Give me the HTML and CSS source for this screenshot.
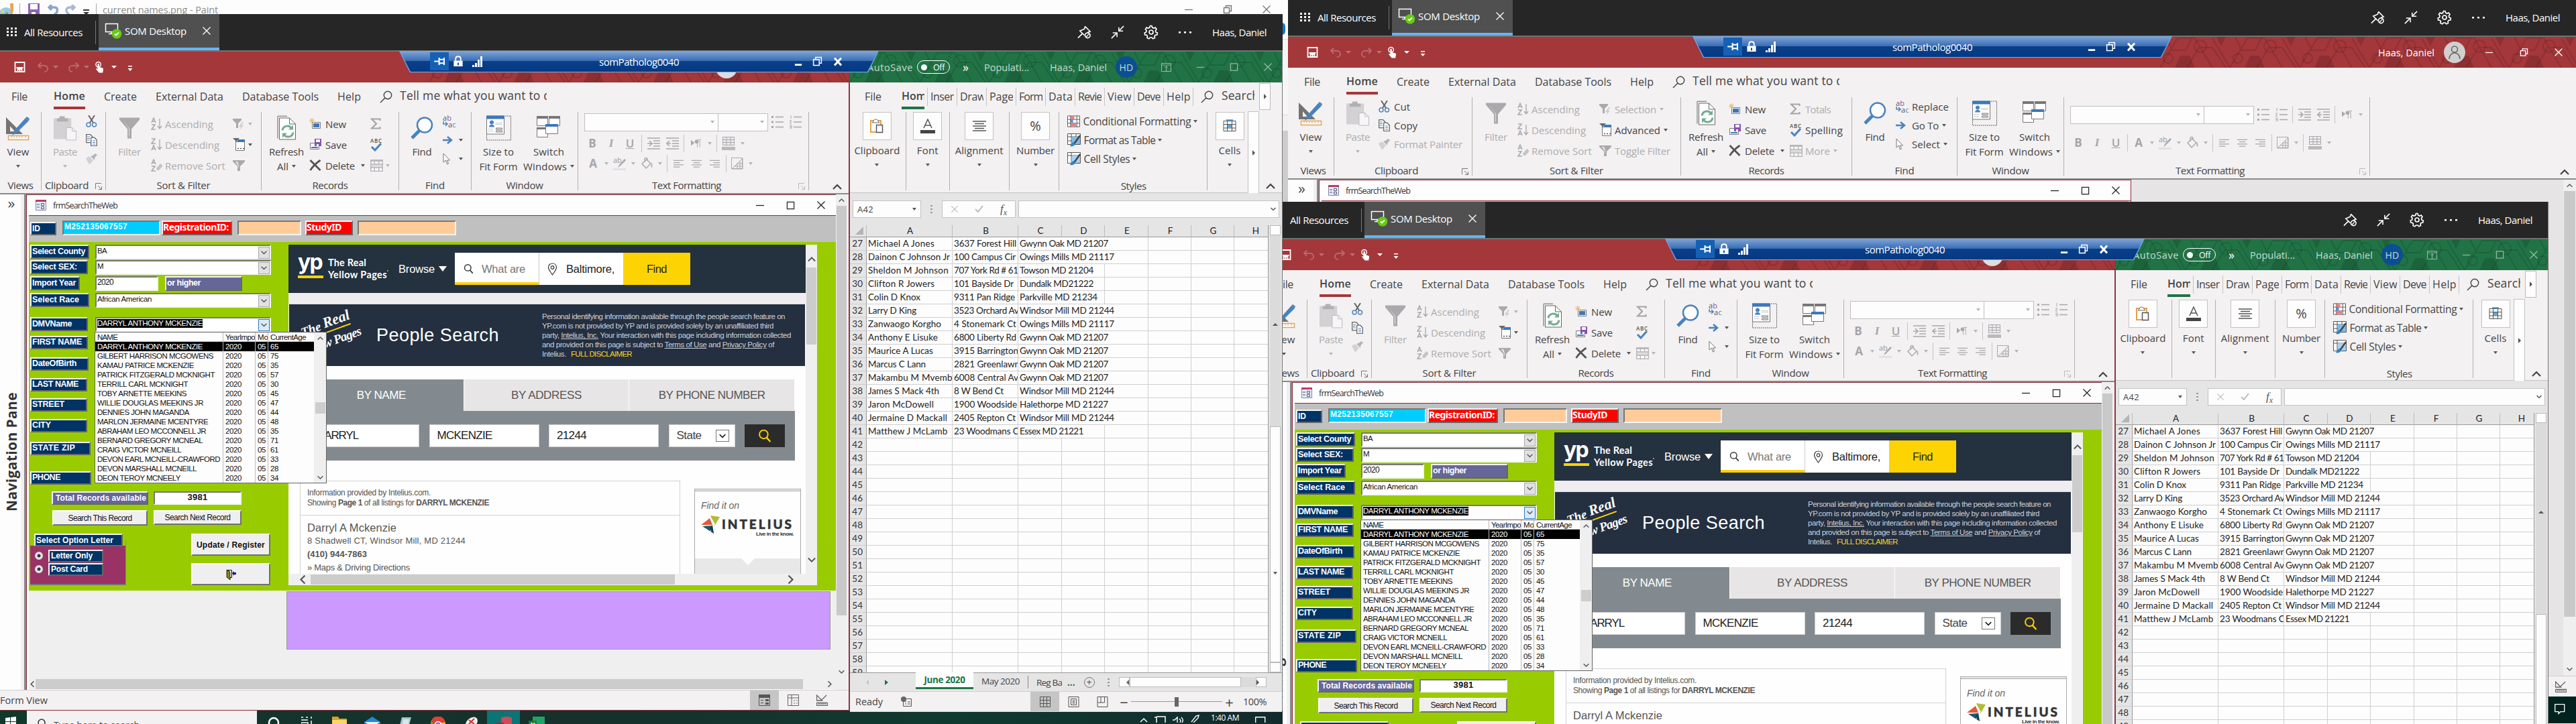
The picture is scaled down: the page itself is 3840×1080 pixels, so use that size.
FILE: index.html
```html
<!DOCTYPE html>
<html lang="en">
<head>
<meta charset="utf-8">
<title>Desktop</title>
<link rel="stylesheet" href="styles.css">
</head>
<body>
<svg class="sprite" width="0" height="0" aria-hidden="true">
<defs>
<pattern id="hex" width="104" height="46" patternUnits="userSpaceOnUse"><g fill="none" stroke="#000" stroke-opacity=".13" stroke-width="2"><path d="M0 46 26 2h26l26 44M40 46l18-30h20l20 30M78 2l26 44M8 0l10 20h20L48 0"/><circle cx="60" cy="14" r="9"/><circle cx="12" cy="32" r="7"/></g><path d="M30 28h14l8 18H22zM84 0h14l-7 14z" fill="#000" fill-opacity=".14"/></pattern>
</defs>
<symbol id="grid9" viewBox="0 0 16 16"><path fill="#fff" d="M0 1h3v3H0zM6 1h3v3H6zM12 1h3v3h-3zM0 6h3v3H0zM6 6h3v3H6zM12 6h3v3h-3zM0 11h3v3H0zM6 11h3v3H6zM12 11h3v3h-3z"/></symbol>
<symbol id="monitor" viewBox="0 0 26 26"><path d="M1.500 2.500h18v12h-18zM6 17.500h8M10 15v2" fill="none" stroke="#fff" stroke-width="1.500"/><circle cx="18" cy="17.500" r="7.300" fill="#6c1"/><path d="m15 17.500 2 2 4-4" fill="none" stroke="#fff" stroke-width="1.800"/></symbol>
<symbol id="x" viewBox="0 0 14 14"><path d="m1.500 1.500 11 11m0-11-11 11" fill="none" stroke="currentColor" stroke-width="1.300"/></symbol>
<symbol id="xb" viewBox="0 0 14 14"><path d="m2 1.500 10 11m0-11-10 11" fill="none" stroke="currentColor" stroke-width="3"/></symbol>
<symbol id="min" viewBox="0 0 14 14"><path d="M1 7.500h12" stroke="currentColor" stroke-width="1.300"/></symbol>
<symbol id="minb" viewBox="0 0 14 14"><path d="M1 12h11" stroke="currentColor" stroke-width="3"/></symbol>
<symbol id="max" viewBox="0 0 14 14"><path d="M1.500 1.500h11v11h-11z" fill="none" stroke="currentColor" stroke-width="1.300"/></symbol>
<symbol id="restore" viewBox="0 0 14 14"><path d="M1.500 4.500h8v8h-8zM4.500 4V1.500h8v8H10" fill="none" stroke="currentColor" stroke-width="1.400"/></symbol>
<symbol id="pin" viewBox="0 0 22 22"><path d="m12 2 8 8-3 1-3 3M12 2l-1 4-5 2-2 1 4 4-7 7M8 13l3 3" fill="none" stroke="#fff" stroke-width="1.700"/><circle cx="16" cy="16" r="4" fill="#262626" stroke="#fff" stroke-width="1.700"/><path d="m13.500 18.500 5-5" stroke="#fff" stroke-width="1.400"/></symbol>
<symbol id="shrink" viewBox="0 0 22 22"><path d="m1 21 9-9M3 12h7v7M21 1l-8 8M13 3v6h7" fill="none" stroke="#fff" stroke-width="1.700"/></symbol>
<symbol id="gear" viewBox="0 0 22 22"><path d="m9.500 1.500-.7 2.600-2 1-2.600-1L2.500 6.500l1.500 2-.4 2.500-2.400 1 .5 3 2.600.4 1.200 1.800-.5 2.400 2.700 1.200 1.800-1.800h2.500l1.800 1.800 2.700-1.200-.5-2.400 1.200-1.800 2.600-.4.500-3-2.400-1-.4-2.500 1.500-2-1.700-2.400-2.600 1-2-1-.7-2.600z" fill="none" stroke="#fff" stroke-width="1.700"/><circle cx="11" cy="11" r="3" fill="none" stroke="#fff" stroke-width="1.700"/></symbol>
<symbol id="dots" viewBox="0 0 22 4"><path fill="#fff" d="M1 1h3v2.500H1zM9 1h3v2.500H9zM17 1h3v2.500h-3z"/></symbol>
<symbol id="save" viewBox="0 0 16 16"><path d="M1 1h14v14H1z" fill="none" stroke="#fff" stroke-width="1.800"/><path d="M3 9h10M5 15v-4h6v4" fill="none" stroke="#fff" stroke-width="1.800"/><path d="M7 12h2v3H7z" fill="#fff"/></symbol>
<symbol id="undo" viewBox="0 0 18 16"><path d="M1 5h9c9 0 8 10 1 10M6 .5 1.500 5 6 9.500" fill="none" stroke="#fff" stroke-width="2"/></symbol>
<symbol id="touch" viewBox="0 0 16 18"><circle cx="6" cy="5" r="4" fill="none" stroke="#fff" stroke-width="1.500"/><path fill="#fff" d="M4.700 4.500c0-1.600 2.600-1.600 2.600 0V9l5 1.200c1.700.4 1.700 1.500 1.500 3L13 18H7l-5-6c1-1 2-.5 2.700.3z"/></symbol>
<symbol id="more" viewBox="0 0 8 10"><path fill="#fff" d="M1 1h6v1.500H1zM.500 5h7L4 9z"/></symbol>
<symbol id="push" viewBox="0 0 18 14"><path d="M0 7h7M8 1v12M8 4h7M8 10h7M16 1v12" stroke="#fff" stroke-width="2.200"/></symbol>
<symbol id="lock" viewBox="0 0 14 18"><path d="M3 8V5c0-5 8-5 8 0v3" fill="none" stroke="#fff" stroke-width="2"/><path fill="#fff" d="M0 8h14v9H0z"/><path d="M7 11v4" stroke="#0a3d83" stroke-width="2"/></symbol>
<symbol id="signal" viewBox="0 0 16 16"><path fill="#fff" d="M0 13h3v3H0zM4 10h3v6H4zM8 5h3v11H8zM12 0h3v16h-3z"/></symbol>
<symbol id="search" viewBox="0 0 19 19"><circle cx="12" cy="7" r="5.700" fill="none" stroke="currentColor" stroke-width="1.400"/><path d="M8 11 1 18" stroke="currentColor" stroke-width="1.500"/></symbol>
<symbol id="views" viewBox="0 0 36 36"><path d="M0 2v25h25zM6 15l7 8H6z" fill="#737373" fill-rule="evenodd"/><path d="m29 3 5 4-18 18-7 4 3-7z" fill="#4a82bd"/><path d="m31 1 4 3-1 3-5-4z" fill="#4a82bd"/><path d="M3.500 29.500h30v6h-30z" fill="#fff" stroke="#e0a55d" stroke-width="1.500"/><path d="M8 30v3m4-3v3m4-3v3m4-3v3m4-3v3m5-3v3" stroke="#e0a55d"/></symbol>
<symbol id="paste" viewBox="0 0 36 38"><path fill="#d2d1d3" d="M0 4h27v32H0z"/><path fill="#b1b0b2" d="M5 4h4V1h8v3h5v5H5z"/><path d="M19.500 18.500h9l6 6v13h-15z" fill="#f6f5f7" stroke="#bbbabd"/><path d="M28.500 18v6h6" fill="none" stroke="#bbbabd"/></symbol>
<symbol id="cut" viewBox="0 0 17 18"><path d="M4 0l7 11M13 0 6 11" stroke="#666" stroke-width="2"/><circle cx="4" cy="14" r="3" fill="none" stroke="#5485bd" stroke-width="1.500"/><circle cx="12.500" cy="14" r="3" fill="none" stroke="#5485bd" stroke-width="1.500"/></symbol>
<symbol id="copy" viewBox="0 0 17 18"><path d="M.700.700h6l3 3v9h-9z" fill="#fff" stroke="#666" stroke-width="1.300"/><path d="M7.700 5.200h5l3.500 3.500v9H7.700z" fill="#fff" stroke="#666" stroke-width="1.300"/><path d="M2 4h4M2 6.500h4M2 9h4m4 1h4m-4 2.500h4M10 15h4" stroke="#5485bd"/></symbol>
<symbol id="brush" viewBox="0 0 17 17"><path d="m0 7 5-3 6 6-5 6-2-1z" fill="#d2d1d3"/><path d="m14 0 3 2-4 5 0 3-6-6 3-1z" fill="#b5b4b6"/></symbol>
<symbol id="funnel" viewBox="0 0 32 33"><path d="M1 1h30v3L19 18v14h-6V18L1 4z" fill="#aaa9ab"/><path d="M6 5 15 17v12h1V17z" fill="#dddcde"/></symbol>
<symbol id="az" viewBox="0 0 17 19"><path d="M1 8 4 1l3 7M2 6h4M1 11h5l-5 7h6" fill="none" stroke="#a9a8aa" stroke-width="1.500"/><path d="M13 2v15M10 13l3 4 3-4" fill="none" stroke="#a9a8aa" stroke-width="1.300"/></symbol>
<symbol id="za" viewBox="0 0 17 19"><path d="M1 1h5L1 8h6M1 18l3-7 3 7M2 16h4" fill="none" stroke="#a9a8aa" stroke-width="1.500"/><path d="M13 2v15M10 13l3 4 3-4" fill="none" stroke="#a9a8aa" stroke-width="1.300"/></symbol>
<symbol id="azx" viewBox="0 0 17 19"><path d="M1 8 4 1l3 7M2 6h4M1 11h5l-5 7h6" fill="none" stroke="#a9a8aa" stroke-width="1.500"/><path d="m8 14 6-7 4 3-6 7H9z" fill="#c5c4c6"/></symbol>
<symbol id="fsel" viewBox="0 0 17 18"><path d="M0 1h13v2L8 8v7H5V8L0 3z" fill="#aaa9ab"/><path d="m14 6-5 7h3l-2 5 6-7h-3l3-5z" fill="#cfced0"/></symbol>
<symbol id="fadv" viewBox="0 0 18 19"><path d="M0 0h10L6 4v4H4V4z" fill="#666"/><path d="M4.500 5.500h13v13h-13z" fill="#fff" stroke="#777"/><path d="M7 2h11v4H7z" fill="#3d78b8"/><path d="M7 15.500h2m2 0h2m2 0h2" stroke="#555" stroke-width="1.500"/></symbol>
<symbol id="ftog" viewBox="0 0 18 18"><path d="M0 1h18v2l-7 7v7H7v-7L0 3z" fill="#aaa9ab"/><path d="M4 3h3l2 6v6l-1-6z" fill="#eee"/></symbol>
<symbol id="refresh" viewBox="0 0 28 37"><path d="M1 34V.700h14" fill="none" stroke="#666"/><path d="M3.500 3.500h15l9 9v23h-24z" fill="#fff" stroke="#666"/><path d="M18.500 3.500v9h9" fill="none" stroke="#666"/><path d="M8 22c1-7 10-9 14-3M24 25c-1 7-10 9-14 3" fill="none" stroke="#74ab8f" stroke-width="3"/><path d="M24 14v7h-7zM8 33v-7h7z" fill="#74ab8f"/></symbol>
<symbol id="new" viewBox="0 0 18 17"><path d="M4.500 6.500h12v9h-12z" fill="#fff" stroke="#777"/><path d="M6 8h9v6H6z" fill="#3d78b8"/><path d="M4 0v8M0 4h8M1 1l6 6m0-6L1 7" stroke="#ecb55f"/></symbol>
<symbol id="rsave" viewBox="0 0 18 17"><path d="M1.500 6.500h13v9h-13z" fill="#fff" stroke="#777"/><path d="M3 12h10v2H3z" fill="#3d78b8"/><path d="M8 0h10v11H8z" fill="#8453ad"/><path d="M10 1h6v4h-6zM11 8h3v3h-3z" fill="#fff"/></symbol>
<symbol id="del" viewBox="0 0 18 17"><path d="m1 1 15 15M16 1C10 5 5 10 1 16" fill="none" stroke="#555" stroke-width="2.800"/></symbol>
<symbol id="sigma" viewBox="0 0 16 17"><path d="M14.500 4V1.500H2l7 7-7 7h12.500V13" fill="none" stroke="#a6a5a7" stroke-width="2.200"/></symbol>
<symbol id="abc" viewBox="0 0 18 20"><text x="0" y="7" font-size="8" font-family="Open Sans" font-weight="600" textLength="17" fill="#555">ABC</text><path d="m2 13 5 5 9-10" fill="none" stroke="#4a82bd" stroke-width="3"/></symbol>
<symbol id="rmore" viewBox="0 0 19 18"><path d="M0 0h19v18H0z" fill="#b9b8ba"/><path d="M1.500 3h4v3h-4zM7 3h5v3H7zM13.500 3h4v3h-4zM1.500 13h4v3.500h-4zM7 13h5v3.500H7zM13.500 13h4v3.500h-4z" fill="#fff"/><path d="M1.500 7.500h16v4h-16z" fill="#dcdbdd"/></symbol>
<symbol id="find" viewBox="0 0 34 34"><circle cx="21" cy="12.500" r="11" fill="#fff" stroke="#4a82bd" stroke-width="2.500"/><path d="M13 21 2 32" stroke="#4a82bd" stroke-width="5"/></symbol>
<symbol id="replace" viewBox="0 0 20 18"><text x="0" y="8" font-size="11" font-family="Open Sans" fill="#555">a<tspan fill="#8453ad">b</tspan></text><text x="8" y="18" font-size="11" font-family="Open Sans" fill="#555">a<tspan fill="#4a82bd">c</tspan></text><path d="M1 9v4h5M4 10l3 3-3 3" fill="none" stroke="#4a82bd" stroke-width="1.500"/></symbol>
<symbol id="goto" viewBox="0 0 15 12"><path d="M0 6h12M7 1l6 5-6 5" fill="none" stroke="#4a82bd" stroke-width="2.500"/></symbol>
<symbol id="cursor" viewBox="0 0 12 18"><path d="M1 1v13l3.500-3 2 6 2-1-2-5h4z" fill="#fff" stroke="#777"/></symbol>
<symbol id="sizeto" viewBox="0 0 37 37"><path d="M28 .500h8.500v36H.500V28" fill="none" stroke="#666" stroke-dasharray="2 1"/><path d="M.500.500h26v27H.500z" fill="#fff" stroke="#777"/><path d="M0 0h27v5H0z" fill="#3d78b8"/><circle cx="8" cy="10" r="3" fill="#4a82bd"/><path d="M4 17c0-5 8-5 8 0z" fill="#4a82bd"/><path d="M14 11h9M14 13h9M3 20h8M3 23h8" stroke="#999" stroke-dasharray="1 1"/><path d="M14.500 18.500h9v2h-9zM14.500 22.500h9v2h-9z" fill="none" stroke="#777"/></symbol>
<symbol id="switch" viewBox="0 0 36 33"><g fill="#fff" stroke="#777"><path d="M.500 1.500h16v13H.500zM18.500 1.500h16v13h-16zM.500 18.500h16v13H.500z"/><path d="M13.500 13.500h18v13h-18z"/></g><path d="M0 0h17v4H0zM18 0h17v4H18zM0 17h13v3H0z" fill="#777"/><path d="M13 12h19v4H13z" fill="#3d78b8"/></symbol>
<symbol id="bul" viewBox="0 0 18 20"><path d="M6 2.500h12M6 10h12M6 17.500h12" stroke="#a9a8aa" stroke-width="1.300"/><path d="M0 1h3v3H0zM0 8.500h3v3H0zM0 16h3v3H0z" fill="#a9a8aa"/></symbol>
<symbol id="num" viewBox="0 0 18 20"><path d="M6 2.500h12M6 10h12M6 17.500h12" stroke="#a9a8aa" stroke-width="1.300"/><path d="M2 0v5M0 8h3l-3 4h3M0 15h3v5H0m0-2.500h3" fill="none" stroke="#a9a8aa"/></symbol>
<symbol id="ind" viewBox="0 0 19 18"><path d="M0 1h19M9 5h10M9 9h10M9 13h10M0 17h19M0 9h6M3 5l4 4-4 4" fill="none" stroke="#a9a8aa" stroke-width="1.600"/></symbol>
<symbol id="outd" viewBox="0 0 19 18"><path d="M0 1h19M9 5h10M9 9h10M9 13h10M0 17h19M1 9h6M5 5 1 9l4 4" fill="none" stroke="#a9a8aa" stroke-width="1.600"/></symbol>
<symbol id="para" viewBox="0 0 16 14"><path d="m0 2 5 4-5 4zM11 1h5M10 13V1M14 13V1" fill="#a9a8aa" stroke="#a9a8aa"/><circle cx="9" cy="4" r="3" fill="#a9a8aa"/></symbol>
<symbol id="tgrid" viewBox="0 0 20 20"><path d="M1.500.500h17v12h-17zM1 4.500h17M1 8.500h17M7 0v12M13 0v12" fill="#eceaee" stroke="#a9a8aa"/><path fill="#bab9bb" d="M0 15h20v5H0z"/></symbol>
<symbol id="hilite" viewBox="0 0 20 20"><text x="0" y="9" font-size="11" font-family="Open Sans" fill="#999">ab</text><path d="m19 5-9 9-3 2 2-4 8-9z" fill="#a9a8aa"/><path fill="#e2e1e3" d="M0 17h19v3H0z"/></symbol>
<symbol id="bucket" viewBox="0 0 18 18"><path d="M2 9 9 3l6 6-7 7zM6 7V2c0-2 4-2 4 0v3" fill="none" stroke="#a9a8aa" stroke-width="1.400"/><path d="M16 7c2 3 2 6 1 8-2 0-2-3-1-8z" fill="#bbb"/></symbol>
<symbol id="al" viewBox="0 0 16 12"><path d="M0 1h16M0 4.500h10M0 8h16M0 11.500h10" stroke="#a9a8aa" stroke-width="1.300"/></symbol>
<symbol id="ac" viewBox="0 0 16 12"><path d="M0 1h16M3 4.500h10M0 8h16M3 11.500h10" stroke="#a9a8aa" stroke-width="1.300"/></symbol>
<symbol id="ar" viewBox="0 0 16 12"><path d="M0 1h16M6 4.500h10M0 8h16M6 11.500h10" stroke="#a9a8aa" stroke-width="1.300"/></symbol>
<symbol id="gl" viewBox="0 0 18 18"><path d="M.500.500h16v16H.500z" fill="none" stroke="#888" stroke-dasharray="2 1"/><path d="M1 17 17 1v16zM5 13h12M9 9h8M9 17V9M13 17V5" fill="none" stroke="#a9a8aa"/></symbol>
<symbol id="launch" viewBox="0 0 10 10"><path d="M9 .500H.500V9M4 4l5 5M9.500 5v4.500H5" fill="none" stroke="currentColor"/></symbol>
<symbol id="up" viewBox="0 0 14 9"><path d="m1 8 6-6 6 6" fill="none" stroke="currentColor" stroke-width="2.200"/></symbol>
<symbol id="formico" viewBox="0 0 16 16"><path d="M.500.500h15v15H.500z" fill="#e9edf8" stroke="#7d86a8"/><path d="M0 0h16v3H0z" fill="#bb3b68"/><path d="M2 7h4M2 11h4" stroke="#44507a"/><path d="M8.500 5.500h4v3h-4zM8.500 10.500h4v3h-4z" fill="#fff" stroke="#44507a"/></symbol>
<symbol id="pinmap" viewBox="0 0 14 19"><path d="M7 18C3 12 1 10 1 7c0-8 12-8 12 0 0 3-2 5-6 11z" fill="none" stroke="#333" stroke-width="1.200"/><circle cx="7" cy="7" r="2.300" fill="none" stroke="#333" stroke-width="1.200"/></symbol>
<symbol id="mag" viewBox="0 0 19 19"><circle cx="8" cy="7.500" r="6" fill="none" stroke="currentColor" stroke-width="1.800"/><path d="m12 12 5.500 6" stroke="currentColor" stroke-width="2.200"/></symbol>
<symbol id="door" viewBox="0 0 16 16"><path d="M2.500 1.500h7v11h-7z" fill="#fff" stroke="#000"/><path d="m2 1 5 3v12l-5-4z" fill="#8a8500" stroke="#000" stroke-width=".8"/><path d="m10 6 3-3v2h3v3h-3v2z" fill="#11168f"/></symbol>
<symbol id="intel" viewBox="0 0 28 28"><path d="M14 0 28 2 20 16z" fill="#b5ba38"/><path d="M0 14 13 4l4 10z" fill="#e35a34"/><path d="m2 16 14-1 3 12z" fill="#185a70"/><path d="m14 1 3 14-5 12 9-14z" fill="#fff"/><path d="m17 14 2 13-6-7z" fill="#123f52"/></symbol>
<symbol id="clip" viewBox="0 0 20 22"><path d="M1 3h15v17H1z" fill="#fff" stroke="#e3a14c" stroke-width="2"/><path d="M5 4c0-4 7-4 7 0l2 2H3z" fill="#fff" stroke="#666"/><path d="M9.500 9.500h9v11h-9z" fill="#fff" stroke="#555" stroke-width="1.500"/></symbol>
<symbol id="fontA" viewBox="0 0 22 22"><path d="m5 14 6-13 6 13M7 10h8" fill="none" stroke="#555" stroke-width="1.500"/><path fill="#444" d="M0 17h22v5H0z"/></symbol>
<symbol id="alx" viewBox="0 0 20 16"><path d="M0 1h20M3 4.500h14M0 8h20M3 11.500h14M0 15h20" stroke="#555" stroke-width="1.300"/></symbol>
<symbol id="cond" viewBox="0 0 20 18"><path d="M.500.500h19v17H.500zM5 0v18M15 0v18M0 6h20M0 12h20" fill="#fff" stroke="#555"/><path fill="#ee7b83" d="M5 1h6v5H5zM5 12h9v5H5z"/><path fill="#3f97dd" d="M5 6h4v5H5z"/></symbol>
<symbol id="ftable" viewBox="0 0 20 20"><path d="M.500.500h19v16H.500zM6 0v17M13 0v17M0 5h20M0 11h20" fill="#fff" stroke="#555"/><path fill="#7cbced" d="M7 5h12v11H7z"/><path d="m19 3-7 10-2 2" stroke="#444" stroke-width="2.500"/><path d="m4 19 4-6 4 3c-2 3-5 4-8 3z" fill="#2f86cf"/></symbol>
<symbol id="cellst" viewBox="0 0 20 20"><path d="M.500.500h19v16H.500zM6 0v17M0 5h20" fill="#fff" stroke="#555"/><path fill="#a7d1f2" d="M7 5h12v11H7z"/><path d="m19 3-7 10-2 2" stroke="#444" stroke-width="2.500"/><path d="m4 19 4-6 4 3c-2 3-5 4-8 3z" fill="#2f86cf"/></symbol>
<symbol id="cells" viewBox="0 0 20 20"><path d="M1 2.500h18v15H1zM6.500 2v16M13.500 2v16M1 7.500h18M1 13h18" fill="#fff" stroke="#555"/><path fill="#5aa9e4" d="M5 0h10v2H5zM7 8h6v5H7z"/></symbol>
<symbol id="ribopt" viewBox="0 0 15 13"><path d="M.500.500h14v12H.500zM1 3h13M7.500 12V5M5 7l2.500-2.500L10 7" fill="none" stroke="currentColor"/></symbol>
<symbol id="check" viewBox="0 0 13 11"><path d="m1 6 4 4 7-9" fill="none" stroke="#bbb" stroke-width="2"/></symbol>
<symbol id="vgrid" viewBox="0 0 16 16"><path d="M.500.500h15v15H.500zM5.500 0v16M10.500 0v16M0 5.500h16M0 10.500h16" fill="none" stroke="#555"/></symbol>
<symbol id="vpage" viewBox="0 0 16 16"><path d="M.500.500h15v15H.500zM4 3.500h8v9H4zM6 6h4M6 8h4M6 10h4" fill="none" stroke="#555"/></symbol>
<symbol id="vbreak" viewBox="0 0 16 16"><path d="M.500.500h15v15H.500zM.500 9h5V1M5 9h6V1" fill="none" stroke="#555"/></symbol>
<symbol id="macro" viewBox="0 0 16 15"><path d="M3.500 3.500h12v11h-12zM6 8h2m2 0h4M6 11h2m2 0h4" fill="none" stroke="#555"/><circle cx="4" cy="4" r="4" fill="#666"/></symbol>
<symbol id="aform" viewBox="0 0 17 17"><path d="M.500.500h16v16H.500z" fill="none" stroke="#555"/><path fill="#555" d="M0 0h17v5H0zM3 8h4v1H3zM10 7h5v3h-5zM3 12h4v1H3zM10 12h5v3h-5z"/></symbol>
<symbol id="alay" viewBox="0 0 17 17"><path d="M.500.500h16v16H.500zM1 5h15M6 1v15M9 9h2m2 0h2m-6 4h2m2 0h2" fill="none" stroke="#666"/></symbol>
<symbol id="ades" viewBox="0 0 17 17"><path d="M.500 1v8h8zM15 1 8 8M.500 12.500h16v4H.500zM4 13v2m3-2v2m3-2v2m3-2v2" fill="none" stroke="#666" stroke-width="1.300"/></symbol>
<symbol id="person" viewBox="0 0 32 32"><circle cx="16" cy="16" r="16" fill="#d2cfcf"/><circle cx="16" cy="11.500" r="4.500" fill="none" stroke="#666" stroke-width="1.600"/><path d="M8 26c0-12 16-12 16 0" fill="none" stroke="#666" stroke-width="1.600"/></symbol>
<symbol id="note" viewBox="0 0 16 16"><path d="M.700.700h14v11H9l-3 3v-3H.700z" fill="none" stroke="#fff" stroke-width="1.300"/></symbol>
</svg>
<div class="desk">
  <section class="paint">
    <div class="paint-title">
      <svg width="20" height="22" viewBox="0 0 20 22"><ellipse cx="9" cy="15" rx="10" ry="9" fill="#9cc7e6"/><path fill="#e9a35c" d="M15 0h5v12l-4 6z"/><circle cx="4" cy="12" r="2" fill="#e8df53"/><circle cx="10" cy="15" r="2" fill="#5eb45b"/><circle cx="4" cy="18" r="2" fill="#e14b4b"/></svg><i class="bar"></i>
      <svg width="17" height="18" viewBox="0 0 17 18"><path fill="#8e66b5" d="M0 0h17v18H0z"/><path fill="#fff" d="M3 1h11v8H3zM5 13h6v5H5z"/></svg>
      <svg class="pu" width="16" height="16" viewBox="0 0 16 16"><path d="M2 4h8c6 0 6 7 0 11M6 0 2 4l4 4" fill="none" stroke="#8ba5cf" stroke-width="3.500"/></svg>
      <svg class="pr" width="16" height="16" viewBox="0 0 16 16"><path d="M14 4H8C0 4 0 11 7 15M10 0l4 4-4 4" fill="none" stroke="#a8b9d2" stroke-width="3.500"/></svg>
      <svg class="pm" width="9" height="10" viewBox="0 0 9 10"><path d="M0 1h9v2H0zM0 5h9L4.500 9z" fill="#333"/></svg><i class="bar"></i>
      <span class="fit pname" data-w="172">current names.png - Paint</span>
      <span class="spring"></span>
      <svg class="wc" width="14" height="14"><use href="#min"/></svg><svg class="wc" width="14" height="14"><use href="#restore"/></svg><svg class="wc last" width="14" height="14"><use href="#x"/></svg>
    </div>
    <div class="paint-side"><i class="help"></i><i class="rib"></i><i class="gap"></i><i class="thumb"></i></div>
  </section>
  <section class="session main" id="session-main"></section>
  <section class="session wide" id="session-wide"></section>
  <section class="session copy" id="session-copy"></section>
</div>
<script src="app.js"></script>
</body>
</html>
```
FILE: app.js
```js
const ic = (n, w, h, c = '') => `<svg class="ic ${c}" width="${w}" height="${h}"><use href="#${n}"/></svg>`;
const fit = (t, w, c = '') => `<span class="fit ${c}" data-w="${w}">${t}</span>`;
const caret = (c = '') => `<i class="caret ${c}"></i>`;
const box = (inner, c = '') => `<span class="cell ${c}">${inner}</span>`;
const vsep = '<i class="vsep"></i>';

const topbar = `
<header class="topbar">
  <div class="all">${ic('grid9', 16, 16)}${fit('All Resources', 87)}</div>
  <div class="som">${ic('monitor', 26, 26)}${fit('SOM Desktop', 92)}${ic('x', 14, 14, 'close')}</div>
  <span class="spring"></span>
  ${ic('pin', 21, 22)}${ic('shrink', 20, 20)}${ic('gear', 22, 22)}${ic('dots', 22, 4)}${fit('Haas, Daniel', 81, 'user')}
</header>`;

const connbar = `
<div class="conn"><div class="conn-in">
  <span class="push">${ic('push', 17, 13)}</span>${ic('lock', 14, 17)}${ic('signal', 16, 16)}
  <span class="host">${fit('somPatholog0040', 119)}</span>
  ${ic('minb', 13, 14)}${ic('restore', 15, 15, 'thick')}${ic('xb', 14, 14)}
</div></div>`;

const cmd = (icon, w, h, text, tw, c = '', car = '') =>
  `<div class="cmd ${c}"><span class="ci">${ic(icon, w, h)}</span>${text ? fit(text, tw) : ''}${car}</div>`;

function ribbon(wide) {
  const L = (t, w) => (wide ? [t, w] : ['', 0]);
  const font = `<div class="combo c1">${caret('dis')}</div><div class="combo c2">${caret('dis')}</div>${box(ic('bul', 18, 20), 'c27')}${box(ic('num', 18, 20), 'c27')}`;
  const indent = box(ic('ind', 19, 18)) + box(ic('outd', 19, 18));
  const para = box(ic('para', 15, 14)) + box(caret('dis'), 'c14');
  const biu = box('<b>B</b>') + box('<em>I</em>') + box('<u>U</u>');
  const tg = box(ic('tgrid', 20, 20)) + box(caret('dis'), 'c14');
  const paint = box('<b>A</b>', 'c26') + box(caret('dis'), 'c14') + box(ic('hilite', 20, 20), 'c26') + box(caret('dis'), 'c14') + box(ic('bucket', 18, 18), 'c26') + box(caret('dis'), 'c14');
  const al = box(ic('al', 15, 12), 'c27') + box(ic('ac', 15, 12), 'c27') + box(ic('ar', 15, 12), 'c27');
  const gl = box(ic('gl', 18, 18), 'c26') + box(caret('dis'), 'c14');
  const text = wide
    ? `<div class="trow t1">${font}${vsep}${indent}${vsep}${para}</div><div class="trow t2">${biu}${vsep}${paint}${vsep}${al}${vsep}${gl}${vsep}${tg}</div>`
    : `<div class="trow t1">${font}</div><div class="trow t2">${biu}${vsep}${indent}${vsep}${para}${vsep}${tg}</div><div class="trow t3">${paint}${vsep}${al}${vsep}${gl}</div>`;
  return `
<div class="groups">
  <div class="group g-views"><div class="gbody"><div class="big">${ic('views', 36, 38)}${fit('View', 33)}${caret()}</div></div><div class="glabel">${fit('Views', 38)}</div></div>
  <div class="group g-clip"><div class="gbody"><div class="big dis">${ic('paste', 35, 38)}${fit('Paste', 36)}${caret('dis')}</div>
    <div class="col tight">${cmd('cut', 17, 18, ...L('Cut', 24))}${cmd('copy', 17, 18, ...L('Copy', 35))}${cmd('brush', 17, 17, ...L('Format Painter', 102), 'dis')}</div></div>
    <div class="glabel"><span>${fit('Clipboard', 65)}</span>${ic('launch', 10, 10)}</div></div>
  <div class="group g-sort"><div class="gbody"><div class="big dis">${ic('funnel', 32, 35)}${fit('Filter', 34)}</div>
    <div class="col c-az">${cmd('az', 17, 19, 'Ascending', 72, 'dis')}${cmd('za', 17, 19, 'Descending', 81, 'dis')}${cmd('azx', 17, 19, 'Remove Sort', 90, 'dis')}</div>
    <div class="col">${cmd('fsel', 17, 18, ...L('Selection', 62), 'dis', caret('dis'))}${cmd('fadv', 18, 19, ...L('Advanced', 68), '', caret())}${cmd('ftog', 18, 18, ...L('Toggle Filter', 83), 'dis')}</div></div>
    <div class="glabel">${fit('Sort &amp; Filter', 80)}</div></div>
  <div class="group g-rec"><div class="gbody"><div class="big">${ic('refresh', 28, 37)}${fit('Refresh', 52)}<div class="inl">${fit('All', 17)}${caret()}</div></div>
    <div class="col c-new">${cmd('new', 18, 17, 'New', 31)}${cmd('rsave', 18, 17, 'Save', 32)}${cmd('del', 19, 17, 'Delete', 44, 'far', caret())}</div>
    <div class="col">${cmd('sigma', 16, 17, ...L('Totals', 38), 'dis')}${cmd('abc', 18, 20, ...L('Spelling', 56))}${cmd('rmore', 19, 18, ...L('More', 37), 'dis', caret('dis'))}</div></div>
    <div class="glabel">${fit('Records', 53)}</div></div>
  <div class="group g-find"><div class="gbody"><div class="big">${ic('find', 34, 34)}${fit('Find', 29)}</div>
    <div class="col tight">${cmd('replace', 20, 18, ...L('Replace', 55))}${cmd('goto', 15, 12, ...L('Go To', 40), '', caret())}${cmd('cursor', 12, 18, ...L('Select', 42), '', caret())}</div></div>
    <div class="glabel">${fit('Find', 29)}</div></div>
  <div class="group g-win"><div class="gbody"><div class="big">${ic('sizeto', 37, 37)}${fit('Size to', 46)}${fit('Fit Form', 57)}</div><div class="big sw">${ic('switch', 36, 33)}${fit('Switch', 46)}<div class="inl">${fit('Windows', 65)}${caret()}</div></div></div><div class="glabel">${fit('Window', 55)}</div></div>
  <div class="group g-text"><div class="gbody tcol">${text}</div><div class="glabel"><span>${fit('Text Formatting', 103)}</span>${ic('launch', 10, 10, 'faint')}</div></div>
  <div class="collapse">${ic('up', 14, 9)}</div>
</div>`;
}

const formTitle = `
<div class="ftitle">${ic('formico', 16, 16)}${fit('frmSearchTheWeb', 96)}<span class="spring"></span>${ic('min', 14, 14)}${ic('max', 13, 13)}${ic('x', 14, 14)}</div>`;

const people = [
  ['DARRYL ANTHONY MCKENZIE', 157, 65], ['GILBERT HARRISON MCGOWENS', 173, 75], ['KAMAU PATRICE MCKENZIE', 144, 35],
  ['PATRICK FITZGERALD MCKNIGHT', 175, 57], ['TERRILL CARL MCKNIGHT', 135, 30], ['TOBY ARNETTE MEEKINS', 133, 45],
  ['WILLIE DOUGLAS MEEKINS JR', 158, 47], ['DENNIES JOHN MAGANDA', 137, 44], ['MARLON JERMAINE MCENTYRE', 165, 48],
  ['ABRAHAM LEO MCCONNELL JR', 162, 35], ['BERNARD GREGORY MCNEAL', 157, 71], ['CRAIG VICTOR MCNEILL', 125, 61],
  ['DEVON EARL MCNEILL-CRAWFORD', 183, 33], ['DEVON MARSHALL MCNEILL', 148, 28], ['DEON TEROY MCNEELY', 124, 34]];

const lab = (t, w, c) => `<div class="lab ${c}">${fit(t, w)}</div>`;
const drop = (inner, c = '') => `<div class="field drop ${c}">${inner}<span class="dbtn">${ic('up', 9, 6, 'down')}</span></div>`;

const leftForm = `
<div class="left">
  <div class="fields">
    ${lab('Select County', 79, 'w88')}${drop(fit('BA', 14))}
    ${lab('Select SEX:', 67, 'w86')}${drop(fit('M', 9))}
    ${lab('Import Year', 65, 'w74')}<div class="pair"><div class="field yr">${fit('2020', 24)}</div><div class="lab higher">${fit('or higher', 50)}</div></div>
    ${lab('Select Race', 70, 'w88')}${drop(fit('African American', 81))}
    ${lab('DMVName', 59, 'w86')}${drop(`<mark>${fit('DARRYL ANTHONY MCKENZIE', 157)}</mark>`, 'on')}
    ${lab('FIRST NAME', 74, 'w86 s')}<i></i>${lab('DateOfBirth', 66, 'w87 s')}<i></i>${lab('LAST NAME', 69, 'w85 s')}<i></i>
    ${lab('STREET', 48, 'w85 s')}<i></i>${lab('CITY', 28, 'w85 s')}<i></i>${lab('STATE ZIP', 64, 'w90 s')}<i></i>${lab('PHONE', 42, 'w91 s')}<i></i>
  </div>
  <div class="totals"><div class="lab tot">${fit('Total Records available', 135)}</div><div class="field num">${fit('3981', 30)}</div></div>
  <div class="searches"><div class="btn b1">${fit('Search This Record', 95)}</div><div class="btn b2">${fit('Search Next Record', 98)}</div></div>
  <div class="actions">
    <fieldset class="opts"><legend class="lab">${fit('Select Option Letter', 115)}</legend>
      <label><i class="radio"></i><span class="lab">${fit('Letter Only', 62)}</span></label><label><i class="radio"></i><span class="lab">${fit('Post Card', 55)}</span></label></fieldset>
    <div class="abtns"><div class="btn">${fit('Update / Register', 102)}</div><div class="btn">${ic('door', 18, 16)}</div></div>
  </div>
</div>`;

const list = `
<div class="list">
  <div class="lrows"><div class="lr head"><span>${fit('NAME', 30)}</span><span>${fit('YearImport', 50)}</span><span>${fit('Mo', 16)}</span><span>${fit('CurrentAge', 53)}</span></div>
  ${people.map((p, i) => `<div class="lr ${i ? '' : 'sel'}"><span>${fit(p[0], p[1])}</span><span>${fit('2020', 24)}</span><span>${fit('05', 12)}</span><span>${fit(p[2], 12)}</span></div>`).join('')}</div>
  <div class="lscroll">${ic('up', 9, 7)}<i></i>${ic('up', 9, 7, 'down')}</div>
</div>`;

const web = `
<div class="web"><div class="wmain"><div class="page">
  <div class="yp"><div class="yplogo">${fit('yp', 36)}</div><div class="yptext">${fit('The Real', 57)}${fit("Yellow Pages<sup>'</sup>", 90)}</div>
    <div class="browse">${fit('Browse', 54)}<i></i></div>
    <div class="what">${ic('mag', 15, 16)}${fit('What are', 65)}</div><div class="where">${ic('pinmap', 15, 19)}${fit('Baltimore,', 72)}</div><div class="go">${fit('Find', 30)}</div></div>
  <div class="strip"></div>
  <div class="hero"><div class="script"><span class="s1">The</span><span class="s2">Real</span><i></i><span class="s3">Yellow Pages</span></div><h1>${fit('People Search', 183)}</h1>
    <div class="disc"><div>${fit('Personal identifying information available through the people search feature on', 362)}</div><div>${fit('YP.com is not provided by YP and is provided solely by an unaffiliated third', 345)}</div><div>${fit('party, <u>Intelius, Inc.</u> Your interaction with this page including information collected', 371)}</div><div>${fit('and provided on this page is subject to <u>Terms of Use</u> and <u>Privacy Policy</u> of', 346)}</div><div>${fit('Intelius.', 36)}<u class="full">${fit('FULL DISCLAIMER', 91)}</u></div></div></div>
  <div class="wtabs"><div class="on">${fit('BY NAME', 73)}</div><div>${fit('BY ADDRESS', 105)}</div><div>${fit('BY PHONE NUMBER', 159)}</div></div>
  <div class="inputs"><div class="in i1">${fit('DARRYL', 62)}</div><div class="in">${fit('MCKENZIE', 82)}</div><div class="in">${fit('21244', 44)}</div><div class="in st">${fit('State', 37)}<div class="pick">${ic('up', 10, 7, 'down')}</div></div><div class="sb">${ic('mag', 20, 20)}</div></div>
  <div class="results"><div class="info"><p>${fit('Information provided by Intelius.com.', 184)}</p><p>${fit('Showing <b>Page 1</b> of all listings for <b>DARRYL MCKENZIE</b>', 271)}</p>
      <div class="person"><p class="n">${fit('Darryl A Mckenzie', 133)}</p><p class="a">${fit('8 Shadwell CT, Windsor Mill, MD 21244', 236)}</p><p class="a"><b>${fit('(410) 944-7863', 89)}</b></p><p class="a">${fit('» Maps &amp; Driving Directions', 153)}</p></div></div>
    <div class="card"><div class="cin"><em>${fit('Find it on', 57)}</em><div class="brand">${ic('intel', 28, 28)}<div>${fit('INTELIUS', 107, 'bn')}${fit('Live in the know.', 56, 'tag')}</div></div></div><i class="tri"></i></div></div>
  </div><div class="hs">${ic('up', 14, 9, 'lft')}<i></i>${ic('up', 14, 9, 'rgt')}</div></div>
  <div class="vs">${ic('up', 12, 9)}<i></i>${ic('up', 12, 9, 'down')}</div>
</div>`;

function access(wide) {
  const who = wide ? `<span class="spring"></span>${fit('Haas, Daniel', 84)}${ic('person', 32, 32, 'av')}${ic('min', 13, 14)}${ic('restore', 13, 14)}${ic('x', 14, 14)}` : '';
  const bodyL = `
  <div class="formwin">${formTitle}
    <div class="fhead"><div class="lab id">${fit('ID', 12)}</div><div class="field cyan">${fit('M252135067557', 94)}</div><div class="lab red reg">${fit('RegistrationID:', 98)}</div><div class="field peach p1"></div><div class="lab red stu">${fit('StudyID', 52)}</div><div class="field peach p2"></div></div>
    ${wide ? '' : `<div class="fbody">${leftForm}${web}${list}</div><div class="ffoot"><i></i></div><div class="fh">${ic('up', 10, 7, 'lft')}<i></i>${ic('up', 10, 7, 'rgt')}</div>`}
  </div>`;
  return `
<div class="app access">
  <div class="title red"><svg class="pat"><rect width="100%" height="100%" fill="url(#hex)"/></svg>${ic('save', 17, 16)}${ic('undo', 18, 15, 'dim')}${caret('w dimc')}${ic('undo', 18, 15, 'dim flip')}${caret('w dimc')}${ic('touch', 15, 18)}${caret('w')}${ic('more', 8, 10)}${who}${wide ? '' : '<i class="peek"></i>'}</div>
  <nav class="tabs">${fit('File', 24)}${fit('Home', 47, 'active')}${fit('Create', 49)}${fit('External Data', 101)}${fit('Database Tools', 114)}${fit('Help', 35)}${ic('search', 19, 19)}<span class="tell">${fit('Tell me what you want to do', 236)}</span></nav>
  ${ribbon(wide)}
  <div class="client"><div class="nav"><span class="chev">»</span><span class="ntext">${fit('Navigation Pane', 178)}</span></div><i class="ndiv"></i>
    ${bodyL}${wide ? '<div class="mdi"></div>' : ''}
    <div class="cscroll">${ic('up', 9, 7)}<i></i>${ic('up', 9, 7, 'down')}</div></div>
  <footer class="astat">${fit('Form View', 71)}<span class="spring"></span><span class="vb on">${ic('aform', 17, 17)}</span><span class="vb">${ic('alay', 17, 17)}</span><span class="vb">${ic('ades', 17, 17)}</span></footer>
</div>`;
}

const sheet = [
  ['Michael A Jones', '3637 Forest Hill', 'Gwynn Oak MD 21207', 99, 93, 132], ['Dainon C Johnson Jr', '100 Campus Cir', 'Owings Mills MD 21117', 122, 92, 141],
  ['Sheldon M Johnson', '707 York Rd # 616', 'Towson MD 21204', 120, 103, 110], ['Clifton R Jowers', '101 Bayside Dr', 'Dundalk MD21222', 99, 89, 110],
  ['Colin D Knox', '9311 Pan Ridge', 'Parkville MD 21234', 78, 91, 116], ['Larry D King', '3523 Orchard Ave', 'Windsor Mill MD 21244', 72, 103, 141],
  ['Zanwaogo Korgho', '4 Stonemark Ct', 'Owings Mills MD 21117', 109, 93, 141], ['Anthony E Lisuke', '6800 Liberty Rd', 'Gwynn Oak MD 21207', 104, 93, 132],
  ['Maurice A Lucas', '3915 Barrington', 'Gwynn Oak MD 21207', 97, 96, 132], ['Marcus C Lann', '2821 Greenlawn', 'Gwynn Oak MD 21207', 86, 98, 132],
  ['Makambu M Mvembe', '6008 Central Ave', 'Gwynn Oak MD 21207', 133, 103, 132], ['James S Mack 4th', '8 W Bend Ct', 'Windsor Mill MD 21244', 106, 74, 141],
  ['Jaron McDowell', '1900 Woodside', 'Halethorpe MD 21227', 98, 94, 132], ['Jermaine D Mackall', '2405 Repton Ct', 'Windsor Mill MD 21244', 118, 92, 141],
  ['Matthew J McLamb', '23 Woodmans Ct', 'Essex MD 21221', 118, 101, 95]];

function gridRows() {
  let out = '';
  for (let n = 27; n < 60; n++) {
    const r = sheet[n - 27];
    const cells = r
      ? `<span class="a">${fit(r[0], r[3])}</span><span class="b">${fit(r[1], r[4])}</span>` + (r[5] > 128 ? `<span class="cde">${fit(r[2], r[5])}</span>` : `<span class="cd">${fit(r[2], r[5])}</span><span class="c"></span>`)
      : '<span class="a"></span><span class="b"></span><span class="c"></span><span class="d"></span><span class="c"></span>';
    out += `<div class="xr"><span class="rh">${n}</span>${cells}<span class="d"></span><span class="d"></span><span class="h"></span></div>`;
  }
  return out;
}

const xtabs = [['Insert', 40], ['Draw', 38], ['Page', 36], ['Formulas', 62], ['Data', 36], ['Review', 47], ['View', 36], ['Developer', 70], ['Help', 36]];
const xbig = (c, icon, t, w) => `<div class="xbig ${c}"><span class="xbox">${icon}</span>${fit(t, w)}${caret()}</div>`;
const excel = `
<div class="app excel">
  <div class="title green"><svg class="pat"><rect width="100%" height="100%" fill="url(#hex)"/></svg>${fit('AutoSave', 68, 'as')}<span class="tog"><i></i>${fit('Off', 17)}</span><span class="mm">»</span>${fit('Populati...', 67, 'pop')}${fit('Haas, Daniel', 85, 'usr')}<span class="hd">${fit('HD', 21)}</span>${ic('ribopt', 15, 13)}${ic('min', 13, 14)}${ic('max', 13, 14)}${ic('x', 14, 14)}</div>
  <nav class="tabs xt">${fit('File', 25)}<span class="xh">${fit('Home', 46)}</span>${xtabs.map(t => `<span class="xtab"><span>${fit(...t)}</span></span>`).join('')}<i class="xend"></i>${ic('search', 19, 19)}<span class="xs">${fit('Search', 56)}</span><span class="xmore">${caret('right')}</span></nav>
  <div class="groups">
    ${xbig('x1', ic('clip', 20, 22), 'Clipboard', 68)}${xbig('x2', ic('fontA', 22, 22), 'Font', 32)}${xbig('x3', ic('alx', 20, 16), 'Alignment', 72)}${xbig('x4', '<span class="pct">%</span>', 'Number', 57)}
    <div class="xstyles"><div>${ic('cond', 19, 18)}${fit('Conditional Formatting', 161)}${caret()}</div><div>${ic('ftable', 20, 20)}${fit('Format as Table', 107)}${caret()}</div><div>${ic('cellst', 20, 20)}${fit('Cell Styles', 69)}${caret()}</div><p>${fit('Styles', 38)}</p></div>
    ${xbig('x6', ic('cells', 20, 20), 'Cells', 33)}<div class="xstrip">${caret('right')}</div><div class="collapse">${ic('up', 14, 9)}</div>
  </div>
  <div class="fbar"><div class="nb">${fit('A42', 24)}${caret()}</div><span class="fd"></span><div class="fx">${ic('x', 12, 12)}${ic('check', 13, 11)}<em>f<sub>x</sub></em></div><div class="fl">${ic('up', 8, 6, 'down')}</div></div>
  <div class="sheet"><div class="sg"><div class="xr hdr"><span class="rh"><i></i></span><span class="a">A</span><span class="b">B</span><span class="c">C</span><span class="d">D</span><span class="c">E</span><span class="d">F</span><span class="d">G</span><span class="h">H</span></div>${gridRows()}</div>
    <div class="xv"><span>${caret('upc')}</span><i></i><b></b><span>${caret()}</span></div></div>
  <div class="stabs">${caret('left dis')}${caret('right gr')}<span class="june">${fit('June 2020', 61)}</span><span class="may">${fit('May 2020', 57)}</span><span class="reg">${fit('Reg Balto', 52)}</span><span class="el">...</span><span class="plus">+</span><span class="fd"></span><div class="xhs"><span>${caret('left')}</span><b></b><i></i><span>${caret('right')}</span></div></div>
  <footer class="xstat">${fit('Ready', 41)}${ic('macro', 16, 15)}<span class="spring"></span><span class="vb on">${ic('vgrid', 16, 16)}</span><span class="vb">${ic('vpage', 17, 16)}</span><span class="vb">${ic('vbreak', 17, 16)}</span><span class="zm">−</span><span class="zl"><i></i></span><span class="zm">+</span>${fit('100%', 35, 'pc')}</footer>
</div>`;

const taskbar = `
<div class="task"><span class="start"><svg width="16" height="16" viewBox="0 0 16 16"><path fill="#fff" d="M0 2l7-1v6H0zM8 1l8-1v7H8zM0 8h7v6l-7-1zM8 8h8v8l-8-1z"/></svg></span>
  <span class="find"><svg width="12" height="16" viewBox="0 0 12 16"><circle cx="6" cy="6" r="5" fill="none" stroke="#333" stroke-width="1.500"/></svg>${fit('Type here to search', 128)}</span>
  <span class="ti"><svg width="18" height="18" viewBox="0 0 18 18"><circle cx="9" cy="9" r="7" fill="none" stroke="#fff" stroke-width="2.500"/></svg></span>
  <span class="ti"><svg width="16" height="18" viewBox="0 0 16 18"><path d="M0 1h3M7 1h3M0 5h10M15 0v3M0 9h10v8H0zM15 6v10" fill="none" stroke="#fff" stroke-width="1.500"/></svg></span>
  <span class="ti"><svg width="22" height="18" viewBox="0 0 22 18"><path fill="#d8a02b" d="M0 0h9l2 3h11v15H0z"/><path fill="#fbd667" d="M0 5h22v13H0z"/></svg></span>
  <span class="ti"><svg width="24" height="20" viewBox="0 0 24 20"><path fill="#2187d8" d="M12 0 0 8v12h24V8z"/><path fill="#e9f4fb" d="m1 8 11 8 11-8z"/></svg></span>
  <span class="ti"><svg width="20" height="20" viewBox="0 0 20 20"><path fill="#9fc4cd" d="M5 1h14l-5 19H0z"/><path fill="#d8e6e8" d="M7 4h9l-3 16H4z"/></svg></span>
  <span class="ti"><svg width="22" height="22" viewBox="0 0 22 22"><circle cx="11" cy="11" r="11" fill="#f3c81f"/><path fill="#e24034" d="M1 6a11 11 0 0 1 20 0v3H8L6 16z"/><path fill="#3aa757" d="M1 6l6 9-1 6C0 18-1 11 1 6z"/><circle cx="11" cy="12" r="4.500" fill="#4386f5" stroke="#fff" stroke-width="1.500"/></svg></span>
  <span class="ti"><svg width="22" height="20" viewBox="0 0 22 20"><ellipse cx="12" cy="9" rx="10" ry="7" transform="rotate(-40 12 9)" fill="#eee"/><path d="m16 3-8 8M8 5l8 6" stroke="#c33" stroke-width="2"/></svg></span>
  <span class="ti acc"><svg width="24" height="20" viewBox="0 0 24 20"><path fill="#ce4a57" d="M8 3c0-4 16-4 16 0v17H8z"/><path fill="#a4262c" d="M0 9h12v11H0z"/><text x="3" y="19" font-size="10" fill="#fff" font-family="Open Sans" font-weight="700">A</text></svg></span>
  <span class="ti"><svg width="24" height="20" viewBox="0 0 24 20"><path fill="#21a366" d="M6 0h18v20H6z"/><path fill="#107c41" d="M0 6h12v14H0z"/><text x="3" y="17" font-size="10" fill="#fff" font-family="Open Sans" font-weight="700">X</text></svg></span>
  <span class="spring"></span>
  <svg class="tr" width="12" height="14"><path d="m1 13 5-5 5 5" fill="none" stroke="#fff" stroke-width="1.500"/></svg>
  <svg class="tr" width="18" height="14"><path d="M4 5h13v9M1 6h3v8" fill="none" stroke="#fff" stroke-width="1.500"/></svg>
  <svg class="tr" width="18" height="14"><path d="M1 10h3l4-4v8M11 8q3 3 1 6M14 6q4 4 1 8" fill="none" stroke="#fff" stroke-width="1.400"/></svg>
  <svg class="tr" width="14" height="14"><path d="m2 13 7-9 4-1-1 4-7 7" fill="none" stroke="#fff" stroke-width="1.400"/></svg>
  ${fit('1:40 AM', 42, 'clock')}<svg class="nt" width="16" height="14"><path d="M.700 14V5.700h14V14" fill="none" stroke="#fff" stroke-width="1.400"/></svg>
</div>`;

const narrow = topbar + `<div class="apps">${connbar}${access(false)}${excel}</div>` + taskbar;
document.getElementById('session-main').innerHTML = `<div class="inner">${narrow}</div>`;
document.getElementById('session-copy').innerHTML = `<div class="inner">${narrow}</div>`;
document.getElementById('session-wide').innerHTML =
  topbar + `<div class="apps">${connbar}${access(true)}</div><div class="task wt">${ic('note', 16, 16)}<i></i></div>`;

/* Track each label so that it fills its measured width. */
document.querySelectorAll('.fit').forEach(el => {
  const range = document.createRange();
  range.selectNodeContents(el);
  const r = range.getBoundingClientRect();
  const vertical = getComputedStyle(el).writingMode.startsWith('vertical');
  const now = vertical ? r.height : r.width;
  const want = +el.dataset.w;
  el.style.letterSpacing = ((want - now) / el.textContent.length).toFixed(3) + 'px';
});
```
FILE: styles.css
```css
* { box-sizing: border-box; }
body { margin: 0; background: #fff; font: 16px "Open Sans", "Noto Sans", sans-serif; color: #444; }
p, h1, fieldset, legend { margin: 0; padding: 0; border: 0; font-weight: normal; }
i { font-style: normal; }
svg { flex: none; display: block; }
.sprite { position: absolute; }
.desk { position: relative; width: 3840px; height: 1080px; overflow: hidden; }
.fit { display: inline-block; white-space: nowrap; flex: none; }
.spring { flex: 1; }
.down { transform: scaleY(-1); }
.lft { transform: rotate(-90deg); }
.rgt { transform: rotate(90deg); }
.caret { display: block; flex: none; width: 0; height: 0; border: 3.500px solid transparent; border-top: 4px solid #555; border-bottom: 0; }
.caret.dis { border-top-color: #b5b4b6; }
.caret.w { border-top-color: #fff; border-left-width: 4px; border-right-width: 4px; }
.caret.right { border: 4px solid transparent; border-left: 4px solid #555; border-right: 0; }
.caret.left { border: 4px solid transparent; border-right: 4px solid #666; border-left: 0; }
.caret.left.dis { border-right-color: #c4c4c4; }
.caret.right.gr { border-left-color: #217346; border-left-width: 5px; }
.caret.upc { border: 4px solid transparent; border-bottom: 4px solid #555; border-top: 0; }

/* Paint window behind the sessions */
.paint { position: absolute; left: 0; top: 0; width: 1920px; height: 1080px; background: #fdfdfd; }
.paint-title { display: flex; align-items: flex-start; height: 30px; padding-top: 5px; overflow: hidden; color: #8d8d8d; }
.bar { width: 1px; height: 20px; background: #aaa; }
.paint-title .bar { margin: 0 12px 0 9px; }
.pu { margin: 2px 0 0 12px; } .pr { margin: 2px 0 0 10px; } .pm { margin: 8px 5px 0 11px; }
.paint-title .pm + .bar { margin: 0 9px 0 5px; }
.pname { line-height: 20px; font-size: 14.500px; }
.wc { color: #777; }
.paint-title .wc { margin-right: 44px; margin-top: 2px; }
.paint-title .last { margin-right: 25px; }
.paint-side { margin-left: 1911px; display: flex; flex-direction: column; height: 1050px; }
.help { width: 5px; height: 18px; margin-top: 4px; border-radius: 0 9px 9px 0; background: #1079cf; }
.rib { height: 114px; margin-top: 6px; background: #f5f6f7; border: solid #dadbdc; border-width: 1px 0; }
.gap { height: 23px; background: #f0f0f0; }
.paint-side .thumb { flex: 1; background: #cdcdcd; }

/* Remote sessions */
.session { position: absolute; overflow: hidden; }
.main { left: 0; top: 21px; width: 1912px; height: 1059px; }
.wide { left: 1920px; top: -1px; width: 1920px; height: 1081px; }
.copy { left: 1912px; top: 301px; width: 1887px; height: 779px; border-right: 1px solid #777; }
.inner { width: 1912px; }
.copy .inner { margin-left: -25px; }

.topbar { display: flex; align-items: center; height: 56px; background: #262626; border-bottom: 2px solid #6f7370; color: #fff; font-size: 15px; }
.wide .topbar { padding-left: 8px; }
.all { display: flex; align-items: center; gap: 10px; width: 143px; height: 35px; padding-left: 10px; border-right: 1px solid #777; }
.som { display: flex; align-items: center; width: 180px; height: 54px; margin-left: 4px; padding-left: 9px; background: #505050; border-bottom: 4px solid #68b4f4; }
.all, .som { line-height: 20px; }
.som .fit { margin: 0 23px 0 4px; }
.topbar > .ic { margin-right: 29px; }
.topbar > .user { margin-right: 24px; width: 81px; }
.apps { position: relative; display: flex; height: 983px; }
.conn { position: absolute; left: 595px; top: -1px; width: 715px; height: 32px; background: #76b1ee; clip-path: polygon(0 0, 100% 0, 699px 100%, 16px 100%); z-index: 2; }
.wide .conn { left: 603px; }
.conn-in { display: flex; align-items: center; height: 31px; padding-left: 46px; color: #fff; background: linear-gradient(#7fa6d8, #3a6cb4 48%, #0b3f87 50%, #033a85); clip-path: polygon(1px 0, 714px 0, 698px 100%, 17px 100%); }
.push { display: flex; align-items: center; justify-content: center; width: 28px; height: 27px; background: #1560b5; margin-right: 7px; }
.conn .ic + .ic { margin-left: 14px; }
.host { flex: 1; padding-left: 173px; font-size: 15px; }
.conn-in > .ic:last-child { margin-right: 54px; }
.conn-in > .ic + .ic:last-child { margin-left: 16px; }

.app { display: flex; flex-direction: column; background: #f3f1f2; }
.access { width: 1267px; border-right: 2px solid #8a3842; }
.wide .access { width: 1920px; border: 0; }
.title { position: relative; display: flex; align-items: center; flex: none; height: 46px; color: #fff; overflow: hidden; }
.title.red { background: #a4373a; padding-left: 21px; }
.wide .title.red { padding-left: 28px; }
.pat { position: absolute; left: 640px; top: 0; width: 1300px; height: 46px; }
.wide .pat { left: 1300px; }
.title.red > .ic { margin-right: 10px; position: relative; }
.title.red > .ic:nth-of-type(2) { margin-right: 17px; }
.title.red > .dim { opacity: .25; margin-right: 6px; }
.title.red > .flip { transform: scaleX(-1); margin-left: 9px; }
.dimc { opacity: .3; margin-right: 5px; }
.title.red > .flip + .dimc { margin-right: 8px; margin-left: 0; }
.title.red > .caret + .ic:not(.flip) { margin-right: 10px; }
.title.red > .caret + .ic[height="10"] { margin-left: 16px; margin-top: 4px; }
.peek { position: absolute; left: 1067px; top: 8px; width: 32px; height: 32px; border-radius: 50%; background: #ddd; }
.wide .title.red > .fit { position: relative; font-size: 14.500px; }
.wide .title.red > .av { margin: 0 29px 0 14px; }
.wide .title.red > .av + .ic { margin-right: 39px; }
.wide .title.red > .av + .ic + .ic { margin-right: 38px; }
.wide .title.red > .ic:last-child { margin-right: 19px; }

.tabs { display: flex; align-items: center; flex: none; height: 42px; padding-left: 17px; font-size: 16px; line-height: 28px; }
.wide .tabs { padding-left: 24px; }
.tabs > .fit { margin-right: 28px; padding-bottom: 1px; }
.tabs > .fit:first-child { margin-right: 39px; }
.active { font-weight: 600; border-bottom: 4px solid #a4373a; height: 37px; line-height: 35px; margin-top: 1px; }
.tabs .tell { width: 219px; overflow: hidden; margin-left: 11px; font-size: 17.500px; margin-top: -5px; }

.groups { display: flex; flex: none; height: 123px; padding-top: 2px; border-bottom: 1px solid #c5c3c4; font-size: 15px; }
.access .groups { height: 125px; border-bottom: 2px solid #8b8b8b; }
.wide .groups { padding-left: 7px; }
.group { position: relative; display: flex; flex-direction: column; height: 117px; border-right: 1px solid #b3b1b2; }
.gbody { display: flex; height: 102px; }
.glabel { display: flex; justify-content: center; align-items: center; height: 15px; line-height: 15px; }
.glabel > span:not(.fit) { flex: 1; text-align: center; }
.glabel .ic { margin: 2px 5px 0; color: #777; }
.glabel .faint { color: #bbb; }
.g-views { width: 62px; } .g-clip { width: 96px; } .g-sort { width: 232px; } .g-rec { width: 205px; } .g-find { width: 108px; } .g-win { width: 159px; } .g-text { width: 344px; }
.wide .g-clip { width: 206px; } .wide .g-sort { width: 311px; } .wide .g-rec { width: 255px; } .wide .g-find { width: 157px; } .wide .g-text { width: 456px; }
.big { display: flex; flex-direction: column; align-items: center; width: 54px; height: 92px; padding-top: 5px; line-height: 22px; }
.big > .ic { height: 38px; margin-bottom: 5px; }
.big > .caret { margin-top: 9px; }
.inl { display: flex; align-items: center; gap: 5px; }
.g-clip .big { width: 62px; margin-left: 4px; }
.g-sort .big { width: 62px; margin-left: 4px; }
.g-rec .big { width: 68px; margin-left: 3px; }
.g-find .big { width: 62px; margin-left: 3px; }
.g-win .big { width: 70px; margin-left: 5px; }
.g-win .sw { width: 84px; margin-left: -2px; }
.g-win .sw > .ic { height: 33px; margin: 1px 0 9px; }
.dis { color: #aeadaf; }
.col { display: flex; flex-direction: column; padding-top: 2px; }
.cmd { display: flex; align-items: center; height: 31px; }
.tight { padding-top: 0; }
.tight .cmd { height: 28px; }
.ci { width: 19px; display: flex; }
.cmd .fit { margin-left: 4px; }
.cmd .caret { margin-left: 5px; }
.far .fit + .caret { margin-left: 9px; }
.session:not(.wide) .cmd .ci + .caret { margin-left: 4px; }
.c-az { width: 122px; margin-left: 1px; }
.c-az .ci, .c-az .fit { margin-left: 0; }
.c-az .ci { width: 21px; }
.c-new { width: 91px; }
.g-find .ci { width: 20px; }
.c-new .fit { margin-left: 5px; }
.tcol { flex-direction: column; }
.trow { display: flex; align-items: center; height: 26px; }
.t1 { margin-top: 2px; padding-left: 9px; }
.t2 { height: 27px; margin-top: 5px; padding-left: 7px; }
.t3 { height: 27px; margin-top: 3px; padding-left: 9px; }
.wide .t1 { margin-top: 13px; } .wide .t2 { margin-top: 15px; }
.combo { display: flex; align-items: center; justify-content: flex-end; padding-right: 5px; height: 27px; background: #fdfdfd; border: 1.500px solid #c0bfc1; }
.c1 { width: 200px; } .c2 { width: 75px; margin-left: -1px; }
.cell { display: flex; align-items: center; justify-content: center; width: 28px; color: #a6a5a7; font-size: 17px; line-height: 20px; }
.cell em { font-family: "Liberation Serif", serif; font-weight: bold; }
.c14 { width: 14px; } .c26 { width: 26px; } .c27 { width: 27px; }
.cell u { font-weight: 600; }
.vsep { width: 7px; height: 26px; background: linear-gradient(90deg, transparent 3px, #c5c4c6 3px, #c5c4c6 4px, transparent 4px); }
.collapse { flex: 1; display: flex; justify-content: flex-end; align-items: flex-end; padding: 0 10px 5px; }

/* Client area of the database window */
.client { display: flex; flex: 1; min-height: 0; overflow: hidden; }
.nav { width: 31px; background: #fdfdfe; display: flex; flex-direction: column; align-items: center; padding-left: 3px; }
.wide .nav { width: 38px; }
.chev { font-size: 22px; line-height: 24px; margin-bottom: 271px; }
.ntext { writing-mode: vertical-rl; transform: rotate(180deg); font-weight: bold; font-size: 21px; line-height: 26px; color: #333; }
.ndiv { width: 8px; background: #f0eff1; border-right: 3px solid #8a898b; }
.formwin { display: flex; flex-direction: column; width: 1207px; border-left: 1px solid #8d2d3c; border-top: 1px solid #8d2d3c; padding-left: 3px; background: #fdfdfe; }
.wide .formwin { width: 1211px; border-right: 1px solid #8d2d3c; flex: none; }
.wide .mdi { flex: 1; background: #e6e4e5; }
.ftitle { display: flex; align-items: center; flex: none; height: 31px; padding-left: 10px; border-bottom: 1px solid #8d2d3c; font-size: 12.500px; color: #333; }
.ftitle .fit { margin-left: 10px; }
.ftitle .spring ~ .ic { margin-right: 32px; color: #222; }
.ftitle .spring ~ .ic:last-child { margin-right: 15px; }
.fhead { display: flex; flex: none; height: 39px; padding: 7px 0 0 2px; background: #c0c0c0; }
.lab { border: 2px solid; border-color: #f4f4f4 #666 #666 #f4f4f4; background: #003366; color: #fff; font: bold 12px/14px "Liberation Sans", sans-serif; padding: 1px 1px; height: 21px; }
.field { border: 2px solid; border-color: #777 #f4f4f4 #f4f4f4 #777; background: #fff; color: #111; font: 12px/12px "Liberation Sans", sans-serif; height: 22px; padding: 1px; }
.id { width: 39px; margin: 2px 9px 0 0; height: 20px; }
.cyan { width: 146px; background: #0cf; color: #eff; font-weight: bold; }
.lab.red { background: #f00; font: bold 14px/16px "Noto Sans", sans-serif; margin-left: 2px; width: 105px; height: 22px; padding: 0; }
.lab.stu { width: 71px; margin-left: 6px; }
.peach { background: #fc9; width: 95px; margin-left: 8px; }
.p2 { width: 147px; margin-left: 7px; }
.fbody { position: relative; display: flex; flex: none; height: 520px; padding-top: 4px; background: #9c0; }
.left { width: 387px; padding-left: 2px; }
.fields { display: grid; grid-template-columns: 97px 262px; grid-template-rows: 23px 24px 25px 36px 28px 32px 31px 30px 31px 34px 44px 30px; }
.fields .lab { font-size: 12.500px; }
.fields .s { height: 20px; padding-top: 0; }
.w74 { width: 74px; } .w85 { width: 85px; } .w86 { width: 86px; } .w87 { width: 87px; } .w88 { width: 88px; } .w90 { width: 90px; } .w91 { width: 91px; }
.drop { display: flex; justify-content: space-between; padding-right: 0; }
.dbtn { display: flex; align-items: center; justify-content: center; width: 17px; height: 18px; background: #e1e0e2; border: 1px solid #aaa; color: #555; }
.on .dbtn { background: #d9ebf8; border-color: #2a7ac0; }
.drop mark { background: #000; color: #fff; height: 13px; }
.drop, .list { font-size: 11.500px; }
.pair { display: flex; gap: 10px; }
.yr { width: 94px; } .higher { width: 115px; background: #669; height: 22px; }
.totals { display: flex; padding-left: 32px; }
.tot { width: 144px; background: #669; height: 20px; padding-left: 4px; }
.num { width: 131px; margin-left: 8px; text-align: center; font-weight: bold; font-size: 13px; height: 20px; }
.searches { display: flex; gap: 9px; padding: 8px 0 0 33px; }
.btn { display: flex; align-items: center; justify-content: center; background: #f0eff0; border: 2px solid; border-color: #fff #707070 #707070 #fff; color: #111; font: 12px "Liberation Sans", sans-serif; }
.b1 { width: 142px; height: 23px; } .b2 { width: 131px; height: 22px; }
.actions { display: flex; margin-top: 12px; }
.opts { width: 143px; height: 77px; padding: 0 0 0 6px; background: linear-gradient(#9c0 8px, #936 8px); border-bottom: 2px solid #777; border-right: 1px solid #888; display: block; }
.opts legend { width: 132px; height: 19px; }
.opts label { display: flex; align-items: center; gap: 8px; height: 20px; margin-left: 1px; }
.opts legend + label { margin-top: 4px; }
.opts label .lab { width: 82px; height: 19px; padding: 0 2px; }
.radio { width: 12px; height: 12px; border-radius: 50%; border: 2px solid #ddd; background: radial-gradient(#333 2px, #eee 3px); }
.abtns { margin-left: 97px; display: flex; flex-direction: column; gap: 11px; }
.abtns .btn { width: 118px; height: 33px; font-weight: bold; }

.list { position: absolute; left: 98px; top: 134px; width: 346px; height: 226px; display: flex; background: #fdfdfd; border: 1px solid #666; color: #111; font: 11.500px/14px "Liberation Sans", sans-serif; overflow: hidden; }
.lrows { width: 326px; }
.lr { display: grid; grid-template-columns: 191px 48px 19px 68px; height: 14px; }
.lr span:not(.fit) { border-right: 1px solid #bbb; padding-left: 3px; overflow: hidden; white-space: nowrap; }
.lr > span:last-child { border: 0; }
.head { border-bottom: 1px solid #bbb; }
.sel { background: #000; color: #fff; }
.lscroll { width: 18px; background: #f0eff0; display: flex; flex-direction: column; align-items: center; justify-content: space-between; padding: 5px 0 4px; color: #555; margin-left: auto; }
.lscroll i { width: 15px; height: 17px; background: #cdcdcd; }

/* Embedded browser */
.web { display: flex; width: 788px; height: 508px; background: #fefefe; font-family: "Liberation Sans", sans-serif; }
.wmain { width: 771px; display: flex; flex-direction: column; }
.page { flex: 1; overflow: hidden; min-height: 0; }
.yp { display: flex; align-items: flex-start; height: 72px; background: #24313f; color: #fff; padding: 12px 0 0 14px; }
.yplogo { font: bold 32px/25px "Inter", sans-serif; width: 38px; height: 37px; border-bottom: 4px solid #fdd20a; margin-top: 1px; }
.yptext { display: flex; flex-direction: column; align-items: flex-start; margin: 6px 0 0 7px; font: bold 14.500px/18px Lato, sans-serif; width: 105px; }
.yptext sup { font-size: 8px; line-height: 0; }
.browse { display: flex; align-items: center; gap: 6px; width: 84px; height: 48px; font-size: 16.500px; }
.browse i { border: 6px solid transparent; border-top: 8px solid #fff; border-bottom: 0; }
.what, .where, .go { display: flex; align-items: center; height: 48px; background: #fff; color: #777; font-size: 16.500px; }
.what { width: 125px; border-bottom: 4px solid #fdd20a; padding: 4px 0 0 13px; gap: 12px; color: #777; }
.what .ic { color: #333; }
.where { width: 126px; border-left: 1px solid #ccc; padding-left: 12px; gap: 13px; color: #222; }
.go { width: 100px; justify-content: center; background: #fed304; color: #222; }
.strip { height: 17px; background: #efedef; border-bottom: 1px solid #ddd; }
.hero { display: flex; align-items: center; height: 92px; margin: 0 1px; background: #242f40; color: #fff; }
.script { position: relative; width: 130px; height: 92px; font: italic bold 19px "Liberation Serif", serif; transform: rotate(-20deg); }
.script span { position: absolute; white-space: nowrap; }
.s1 { left: 22px; top: 16px; } .s2 { left: 57px; top: 12px; font-size: 22px; } .s3 { left: 14px; top: 43px; font-size: 19px; letter-spacing: -.8px; }
.script i { position: absolute; left: 58px; top: 38px; width: 38px; height: 2px; background: #fdd20a; }
.hero h1 { font-size: 27px; line-height: 30px; width: 247px; }
.disc { font-size: 11.500px; line-height: 14px; color: #cdd0d5; }
.full { margin-left: 7px; color: #f6d22a; }
.wtabs { display: flex; height: 47px; margin: 20px 16px 0 16px; font-size: 17px; color: #555; }
.wtabs div { width: 246px; display: flex; align-items: center; justify-content: center; background: #e7e5e6; margin-right: 1px; }
.wtabs .on { width: 245px; background: #838a8f; color: #fff; }
.inputs { display: flex; height: 74px; margin: 0 16px; padding: 20px 0 0 14px; background: #838a8f; }
.in { display: flex; align-items: center; width: 164px; height: 34px; margin-right: 14.500px; padding-left: 11px; background: #fff; color: #222; font-size: 17px; border: 1px solid #ccc; }
.i1 { width: 165px; }
.st { width: 99px; color: #444; justify-content: space-between; padding-right: 8px; margin-right: 14px; }
.pick { display: flex; align-items: center; justify-content: center; width: 20px; height: 18px; border: 1px solid #777; color: #111; }
.sb { display: flex; align-items: center; justify-content: center; width: 60px; height: 34px; background: #2b2b2b; color: #fed304; }
.results { display: flex; align-items: flex-start; margin: 30px 0 0 17px; }
.info { width: 567px; height: 200px; border: 1px solid #d3d2d4; padding: 10px 0 0 10px; font-size: 12px; line-height: 15px; color: #555; }
.person { margin: 10px 0 0 -10px; padding: 8px 0 0 10px; border-top: 1px solid #d3d2d4; }
.person .n { font-size: 16.500px; line-height: 20px; } .person .a { font-size: 13px; line-height: 20px; }
.card { width: 159px; height: 200px; margin: 12px 0 0 21px; background: #e9e8e9; border: 1px solid #aaa; }
.cin { height: 101px; background: #fefefe; border-top: 1px solid #aaa; margin-top: 2px; padding: 13px 0 0 9px; }
.cin em { display: block; font-size: 14px; line-height: 17px; color: #666; }
.brand { display: flex; margin-top: 6px; gap: 3px; color: #333; }
.brand div { display: flex; flex-direction: column; align-items: flex-end; }
.bn { font: 900 19px/20px Lato, sans-serif; margin-top: 3px; -webkit-text-stroke: .5px; }
.tag { font-size: 8px; line-height: 9px; font-weight: bold; }
.tri { display: block; width: 0; margin: 0 auto; border: 10px solid transparent; border-top-color: #fefefe; border-bottom: 0; }
.hs { display: flex; align-items: center; height: 17px; background: #f0eff0; padding: 0 15px 0 14px; color: #555; }
.hs i { width: 543px; height: 15px; margin: 0 auto 0 5px; background: #cdcccd; }
.vs { width: 17px; display: flex; flex-direction: column; align-items: center; background: #f0eff0; padding-top: 17px; color: #555; }
.vs i { width: 15px; height: 115px; background: #cdcccd; margin: 8px 0 auto; }
.vs .down { margin-bottom: 33px; }
.ffoot { flex: none; height: 131px; background: #f0eff0; padding: 1px 0 0 384px; }
.ffoot i { display: block; width: 811px; height: 87px; background: #c9f; border: 1px solid #999; border-bottom: 1px solid #a9a; }
.fh { display: flex; align-items: center; height: 16px; background: #f0eff0; color: #555; padding-right: 4px; }
.fh i { width: 1144px; height: 15px; margin-right: auto; background: #cdcccd; }
.fbody, .ffoot, .fh, .fhead { width: 1203px; }
.cscroll { width: 16px; display: flex; flex-direction: column; align-items: center; padding: 5px 0 23px; background: #f0eff0; color: #555; }
.cscroll i { width: 15px; height: 611px; margin: 5px 0 auto; background: #cac9ca; }
.wide .cscroll { width: 19px; padding: 5px 0 6px; } .wide .cscroll i { height: 635px; width: 17px; }
.wide .client { flex: none; height: 740px; }
.astat, .xstat { display: flex; align-items: center; flex: none; height: 31px; font-size: 14.500px; background: #f3f1f2; border-top: 1px solid #d0cfd0; border-bottom: 1px solid #8d2d3c; }
.astat { padding-right: 18px; }
.vb { display: flex; align-items: center; justify-content: center; width: 43px; height: 29px; }
.vb.on { background: #c6c5c6; }
.wide .astat { border-bottom: 0; padding-right: 1px; }

/* Spreadsheet window */
.excel { width: 645px; border-right: 1px solid #777; }
.green { background: #217346; padding-left: 26px; font-size: 14.500px; color: #c5dccd; }
.green > * { flex: none; position: relative; }
.green > .pat { position: absolute; left: 0; margin: 0; opacity: 1; }
.tog { display: flex; align-items: center; gap: 9px; width: 49px; height: 20px; margin-left: 6px; padding-left: 5px; border: 1.500px solid #fff; border-radius: 10px; color: #fff; font-size: 12.500px; }
.tog i { width: 9px; height: 9px; border-radius: 50%; background: #fff; }
.mm { width: 28px; text-align: right; margin-right: 23px; color: #fff; font-size: 18px; line-height: 16px; }
.usr { margin-left: 31px; }
.hd { display: flex; align-items: center; justify-content: center; width: 32px; height: 32px; margin: 0 36px 0 13px; border-radius: 50%; background: #0b4e93; font-size: 14px; }
.green > .ic { margin-right: 37px; opacity: .7; }
.xt { padding-left: 22px !important; }
.xt > .fit:first-child { margin-right: 30px; }
.xh { width: 34px; height: 37px; line-height: 35px; overflow: hidden; border-bottom: 4px solid #217346; font-weight: 600; margin: 1px 4px 0 0; }
.xtab { width: 44px; border-left: 1px solid #c5c4c5; padding-left: 4px; height: 27px; line-height: 27px; }
.xtab > span { display: block; width: 35px; overflow: hidden; height: 27px; }
.xend { width: 12px; height: 27px; border-left: 1px solid #c5c4c5; }
.xs { width: 49px; margin-left: 12px; overflow: hidden; font-size: 17.500px; margin-top: -5px; }
.xmore { display: flex; align-items: center; justify-content: center; width: 17px; height: 40px; margin-left: 7px; background: #fdfdfd; border: 1px solid #bbb; }
.xbig { display: flex; flex-direction: column; align-items: center; height: 117px; border-right: 1px solid #b3b1b2; line-height: 20px; }
.xbox { display: flex; align-items: center; justify-content: center; width: 43px; height: 42px; background: #fdfdfd; border: 1px solid #c3c2c3; margin-bottom: 5px; }
.xbig .caret { margin-top: 10px; }
.x1 { width: 84px; padding-right: 2px; } .x2 { width: 65px; } .x3 { width: 89px; } .x4 { width: 75px; padding-left: 4px; } .x6 { width: 60px; border: 0; padding-left: 6px; }
.pct { font-size: 20px; }
.xstyles { width: 221px; border-right: 1px solid #b3b1b2; padding: 0 0 0 12px; height: 117px; font-size: 15.500px; }
.xstyles div { display: flex; align-items: center; height: 28px; gap: 4px; }
.xstyles p { margin: 18px 11px 0 0; line-height: 16px; text-align: center; font-size: 15px; }
.xstrip { display: flex; align-items: center; justify-content: center; width: 17px; height: 123px; margin-top: -1px; background: #fdfdfd; border: 1px solid #c3c2c3; }
.fbar { display: flex; align-items: center; flex: none; height: 48px; padding: 0 0 1px 4px; background: #e6e5e6; font-size: 13px; }
.fbar > div { display: flex; align-items: center; height: 26px; background: #fdfdfd; border: 1px solid #c3c2c3; }
.fbar > .nb { width: 102px; justify-content: space-between; padding: 0 6px; }
.fd { width: 3px; height: 12px; margin: 0 14px; background: repeating-linear-gradient(#999 0 2px, transparent 2px 5px); }
.fbar > .fx { width: 110px; padding: 0 12px; justify-content: space-between; color: #bbb; }
.fx em { color: #555; font: italic 17px/20px "Liberation Serif", serif; }
.fx sub { font-size: 12px; line-height: 0; }
.fbar > .fl { width: 389px; margin-left: 4px; justify-content: flex-end; padding-right: 4px; }
.sheet { display: flex; flex: none; height: 667px; background: #e6e5e6; overflow: hidden; }
.sg { width: 624px; border-right: 1px solid #999; overflow: hidden; }
.xr { display: flex; height: 20px; font: 13.500px/19px Lato, sans-serif; color: #222; background: #fdfdfd; }
.xr > span { flex: none; border-right: 1px solid #d0cfd0; border-bottom: 1px solid #d0cfd0; padding-left: 2px; overflow: hidden; white-space: nowrap; }
.xr > .rh { width: 25px; background: #e6e5e6; border-right-color: #999; text-align: right; padding-right: 5px; color: #333; }
.a { width: 128px; } .b { width: 98px; } .c { width: 65px; } .d { width: 64px; } .h { width: 51px; } .cd { width: 129px; } .cde { width: 194px; }
.person .a { width: auto; }
.hdr { height: 18px; line-height: 17px; background: #e6e5e6; text-align: center; }
.xr.hdr > span { border-bottom-color: #999; border-right-color: #bbb; }
.hdr .h { padding-left: 14px; }
.hdr .rh i { display: block; margin: 2px 0 0 6px; width: 0; border: 6px solid #b5b4b5; border-top-color: transparent; border-left-color: transparent; }
.xv { width: 16px; margin-left: 2px; display: flex; flex-direction: column; background: #dcdbdc; }
.xv span, .xhs span { display: flex; align-items: center; justify-content: center; width: 16px; height: 15px; background: #fdfdfd; border: 1px solid #bbb; }
.xv i { height: 285px; } .xv b { flex: 1; background: #fdfdfd; border: 1px solid #bbb; }
.stabs { display: flex; align-items: center; flex: none; height: 28px; background: #e6e5e6; border-top: 1px solid #999; font-size: 13.500px; }
.stabs > .left { width: 0; padding: 0; margin: 0 24px; } .stabs > .gr { margin-right: 41px; }
.june { width: 86px; height: 25px; line-height: 23px; align-self: flex-start; margin-top: -1px; text-align: center; background: #fdfdfd; border-bottom: 3px solid #217346; color: #217346; font-weight: bold; }
.may { padding: 0 12px; border-right: 1px solid #888; height: 19px; line-height: 17px; width: 82px; }
.reg { width: 38px; margin-left: 12px; overflow: hidden; white-space: nowrap; }
.el { margin: 0 13px 0 8px; color: #217346; font-weight: bold; }
.plus { width: 16px; height: 16px; border: 1px solid #777; border-radius: 50%; text-align: center; line-height: 13px; }
.stabs .fd { margin: 0 14px 0 19px; }
.xhs { display: flex; width: 220px; height: 15px; background: #dcdbdc; }
.xhs b { width: 166px; background: #fdfdfd; border: 1px solid #bbb; } .xhs i { flex: 1; }
.xstat { padding-left: 8px; border-bottom-color: #ddd; }
.xstat .fit + .ic { margin-left: 27px; }
.zm { font-size: 22px; line-height: 20px; width: 21px; text-align: center; }
.zl { width: 136px; height: 14px; background: linear-gradient(transparent 6px, #999 6px, #999 7px, transparent 7px); display: flex; justify-content: center; }
.zl i { width: 6px; height: 14px; background: #666; }
.pc { margin: 0 22px 0 10px; width: 36px; }

.task { display: flex; align-items: flex-start; height: 20px; background: linear-gradient(90deg, #10382b, #17302c 45%, #0f3a30 75%, #122a2c); overflow: hidden; color: #fff; }
.start { width: 40px; padding: 9px 0 0 8px; }
.task .find { display: flex; gap: 12px; width: 343px; height: 20px; padding: 12px 0 0 16px; background: #f3f1f2; color: #444; font-size: 14px; line-height: 20px; }
.ti { display: flex; justify-content: center; width: 49px; height: 20px; padding-top: 9px; }
.acc { background: #0b7575; }
.tr { margin: 4px 5px 0 5px; }
.tr + .tr { margin-left: 4px; }
.clock { font-size: 12px; line-height: 16px; margin: 3px 24px 0 12px; }
.nt { margin: 4px 25px 0 0; }
.task.wt { height: 41px; justify-content: flex-end; background: #00231f; padding: 12px 2px 0 0; }
.wt svg { margin-right: 14px; }
```
